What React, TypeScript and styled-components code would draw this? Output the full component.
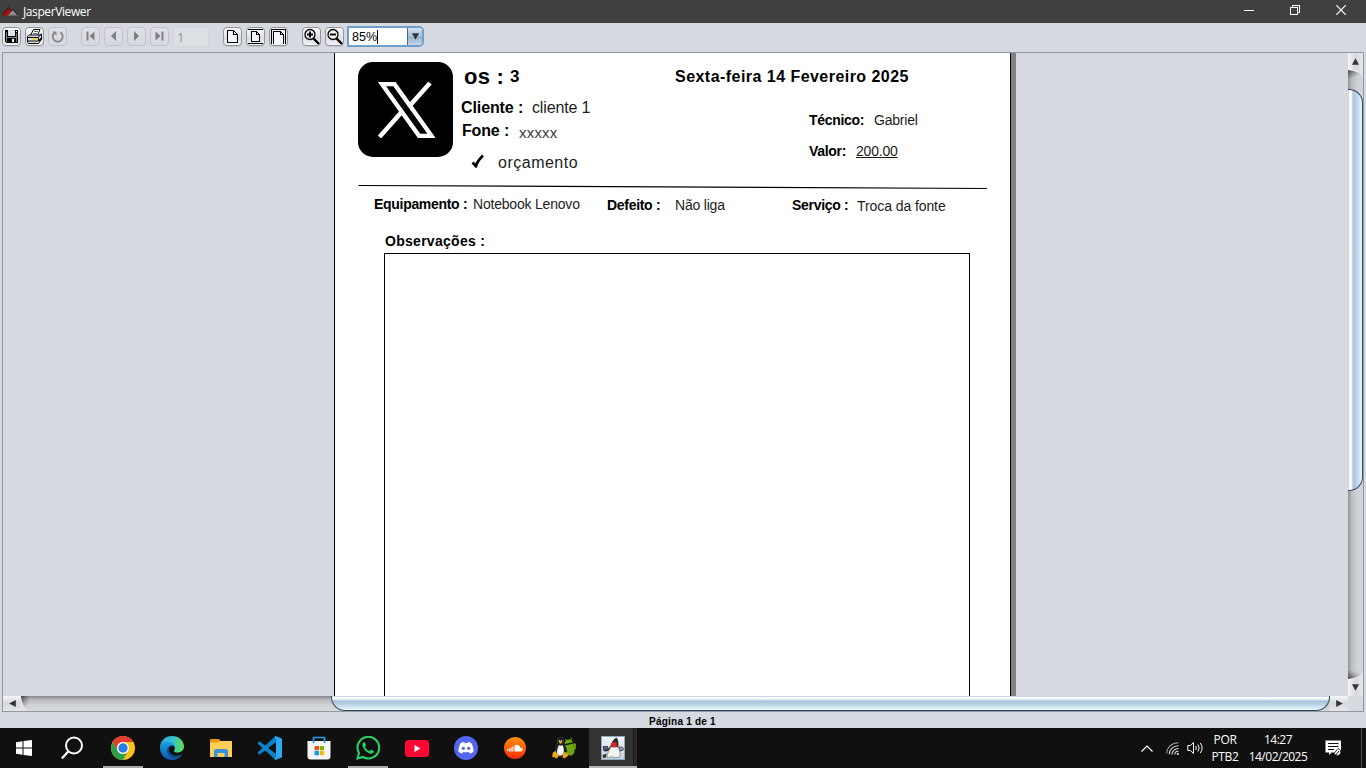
import React from 'react';
import styled, { createGlobalStyle, css } from 'styled-components';

const GlobalStyle = createGlobalStyle`
  * { box-sizing: border-box; }
  html, body { margin: 0; padding: 0; overflow: hidden; }
  body { background: #d6d9df; font-family: "Liberation Sans", Arial, sans-serif; }
  svg { display: block; flex: none; }
`;

const Window = styled.div`
  width: 1366px;
  height: 768px;
  display: flex;
  flex-direction: column;
  background: #d6d9df;
`;

/* ---------- title bar ---------- */

const TitleBar = styled.header`
  height: 23px;
  flex: none;
  display: flex;
  align-items: center;
  background: #404040;
  padding: 0 2px;
`;

const WindowTitle = styled.span`
  margin-left: 5px;
  flex: 1;
  font: 12px/23px "Open Sans", sans-serif;
  letter-spacing: -0.4px;
  color: #fff;
`;

const WindowControl = styled.div`
  width: 46px;
  height: 23px;
  display: flex;
  align-items: center;
  justify-content: center;
  padding-bottom: 3px;
`;

/* ---------- toolbar ---------- */

const Toolbar = styled.div`
  height: 29px;
  flex: none;
  display: flex;
  align-items: flex-start;
  padding: 4px 0 0 2px;
`;

const ToolGroup = styled.div<{ $gap: number }>`
  display: flex;
  gap: 4px;
  margin-right: ${(p) => p.$gap}px;
`;

const ToolButton = styled.div<{ $disabled?: boolean }>`
  width: 19px;
  height: 19px;
  border-radius: 4px;
  display: flex;
  align-items: center;
  justify-content: center;
  ${(p) =>
    p.$disabled
      ? css`
          border: 1px solid #c0c3ca;
          background: linear-gradient(#dfe1e6, #d5d8de);
        `
      : css`
          border: 1px solid #92959c;
          background: linear-gradient(#fbfbfc, #e2e4e9 50%, #d8dbe2 55%, #f3f4f7);
          box-shadow: 0 1px 0 #c3c6cc;
        `}
`;

const PageInput = styled.div`
  width: 36px;
  height: 20px;
  margin: 0 14px 0 4px;
  padding-left: 3px;
  background: #dcdfe3;
  border: 1px solid #d2d5da;
  font: 13px/18px "Open Sans", sans-serif;
  color: #8e9299;
`;

const ZoomBox = styled.div`
  display: flex;
  width: 77px;
  height: 21px;
  margin-top: -1px;
  border: 2px solid #6d9fca;
  border-radius: 1px 5px 5px 1px;
  background: #fff;
`;

const ZoomValue = styled.div`
  flex: 1;
  padding-left: 3px;
  font-size: 12.5px;
  line-height: 18px;
  color: #000;
  display: flex;
  align-items: center;
`;

const Caret = styled.i`
  width: 1px;
  height: 14px;
  background: #000;
`;

const ZoomArrow = styled.div`
  width: 15px;
  display: flex;
  align-items: center;
  justify-content: center;
  border-left: 1px solid #52687c;
  border-radius: 0 3px 3px 0;
  background: linear-gradient(#d5e2ed, #a5bdd2 50%, #96b2ca 55%, #c4d8e8);
`;

/* ---------- viewer ---------- */

const Viewer = styled.main`
  height: 660px;
  flex: none;
  margin: 0 2px;
  border: 1px solid #9297a1;
  display: grid;
  grid-template-columns: 1345px 15px;
  grid-template-rows: 643px 15px;
`;

const Viewport = styled.section`
  overflow: hidden;
  display: flex;
  padding-left: 331px;
`;

const Sheet = styled.article`
  width: 677px;
  background: #fff;
  border: solid #000;
  border-width: 0 1px;
  padding: 9px 0 0 22px;
  display: flex;
  flex-direction: column;
`;

const SheetShadow = styled.div`
  width: 5px;
  background: #808080;
`;

const SheetHeader = styled.div`
  height: 122px;
  display: grid;
  grid-template-columns: 104px 214px 1fr;
`;

const Logo = styled.div`
  width: 95px;
  height: 95px;
  margin-left: 0.5px;
  border-radius: 15px;
  background: #000;
  display: flex;
  align-items: center;
  justify-content: center;
  padding-left: 2px;
`;

const Column = styled.div<{ $top?: number; $left?: number }>`
  display: flex;
  flex-direction: column;
  padding-top: ${(p) => p.$top ?? 0}px;
  padding-left: ${(p) => p.$left ?? 0}px;
`;

const FieldRow = styled.div<{ $columns: string; $height: number; $left?: number }>`
  display: grid;
  grid-template-columns: ${(p) => p.$columns};
  height: ${(p) => p.$height}px;
  flex: none;
  align-items: start;
  padding-left: ${(p) => p.$left ?? 0}px;
`;

const Field = styled.span<{
  $size?: number;
  $bold?: boolean;
  $track?: number;
  $drop?: number;
  $underline?: boolean;
  $tone?: string;
}>`
  font-size: ${(p) => p.$size ?? 14}px;
  font-weight: ${(p) => (p.$bold ? 700 : 400)};
  line-height: 20px;
  letter-spacing: ${(p) => p.$track ?? (p.$size ? 0 : p.$bold ? -0.3 : -0.2)}px;
  padding-top: ${(p) => p.$drop ?? 0}px;
  color: ${(p) => p.$tone ?? (p.$bold ? '#000' : '#1c1c1c')};
  text-decoration: ${(p) => (p.$underline ? 'underline' : 'none')};
  text-underline-offset: 1px;
  text-decoration-thickness: 1px;
  white-space: nowrap;
`;

const CheckSlot = styled.span`
  padding-top: 4px;
`;

const NotesBox = styled.div`
  width: 586px;
  flex: 1;
  margin-left: 27px;
  border: 1px solid #000;
  border-bottom: 0;
`;

/* ---------- scroll bars ---------- */

const VTrack = styled.div`
  display: flex;
  flex-direction: column;
  background: linear-gradient(90deg, #8f9196, #bcbec3 25%, #cfd1d5 60%, #d3d5d9);
`;

const HTrack = styled.div`
  display: flex;
  background: linear-gradient(#83858a, #b9bbc0 25%, #cfd1d5 60%, #d6d8db);
`;

const ScrollButton = styled.div<{ $vertical?: boolean }>`
  width: ${(p) => (p.$vertical ? 15 : 18)}px;
  height: ${(p) => (p.$vertical ? 17 : 15)}px;
  flex: none;
  display: flex;
  align-items: center;
  justify-content: center;
  background: linear-gradient(${(p) => (p.$vertical ? '90deg' : '180deg')}, #f4f5f6, #d5d8dd 50%, #e6e8ea);
`;

const VThumb = styled.div`
  height: 402px;
  margin-top: 11px;
  border: 1px solid #33495f;
  border-left: 0;
  border-radius: 0 14px 14px 0;
  background: linear-gradient(90deg, #b9c8d4, #fff 12%, #f2f7fa 25%, #a9c1d8 38%, #c0d6e7 65%, #e6fafd);
`;

const HThumb = styled.div`
  width: 1000px;
  margin-left: 302px;
  border: 1px solid #33495f;
  border-top: 0;
  border-radius: 0 0 14px 14px;
  background: linear-gradient(#b9c8d4, #fff 12%, #f2f7fa 20%, #a9c1d8 38%, #c0d6e7 65%, #e6fafd);
`;

const Spacer = styled.div`
  flex: 1;
`;

const StatusBar = styled.footer`
  height: 16px;
  flex: none;
  padding-right: 1px;
  text-align: center;
  font-size: 10px;
  font-weight: 700;
  line-height: 19px;
  letter-spacing: 0.22px;
  color: #000;
`;

/* ---------- taskbar ---------- */

const Taskbar = styled.nav`
  height: 40px;
  flex: none;
  display: flex;
  background: #101010;
  color: #fff;
  font: 12px/17px "Open Sans", sans-serif;
`;

const TaskButton = styled.div<{ $width?: number; $running?: boolean; $active?: boolean }>`
  width: ${(p) => p.$width ?? 49}px;
  height: 40px;
  display: flex;
  align-items: center;
  justify-content: center;
  ${(p) =>
    p.$running &&
    css`
      background: linear-gradient(#a9a9a9, #a9a9a9) 5px 38px / 40px 2px no-repeat;
    `}
  ${(p) =>
    p.$active &&
    css`
      margin-left: 1px;
      padding-right: 1px;
      background: linear-gradient(#b4b4b4, #b4b4b4) 0 38px / 100% 2px no-repeat,
        linear-gradient(90deg, #333 44px, #1c1c1c 44px, #1c1c1c 45px, #292929 45px);
    `}
`;

const TrayItem = styled.div<{ $width: number }>`
  width: ${(p) => p.$width}px;
  display: flex;
  align-items: center;
  justify-content: center;
`;

const TrayText = styled.div<{ $width: number; $track?: number }>`
  width: ${(p) => p.$width}px;
  padding-top: 3px;
  text-align: center;
  white-space: nowrap;
  letter-spacing: ${(p) => p.$track ?? 0}px;
`;

const DesktopEdge = styled.div`
  width: 5px;
  border-left: 1px solid #4c4c4c;
`;

/* ---------- drawings ---------- */

const Crisp = ({ w, h, children }: { w: number; h: number; children: React.ReactNode }) => (
  <svg width={w} height={h} viewBox={`0 0 ${w} ${h}`} fill="none" shapeRendering="crispEdges">
    {children}
  </svg>
);

const JasperMark = () => (
  <svg width="16" height="9" viewBox="0 0 16 9">
    <path d="M0 8.5 6.5 0.5 9.5 3 6 8.5z" fill="#b3080c" />
    <path d="M6 8.5 11 2.5 16 8.5z" fill="#8b8b8b" />
    <path d="M0 8.5 6.5 .5 9.3 3.5 11 2.5 16 8.5" fill="none" stroke="#191919" strokeWidth="1" />
  </svg>
);

const SaveIcon = () => (
  <Crisp w={15} h={15}>
    <path d="M1 1h13v13H2l-1-1z" fill="#000" />
    <path d="M4 1h7v6H4z" fill="#dfe3e8" />
    <path d="M4 10h7v4H4z" fill="#000" />
    <path d="M8 10h2v3H8zM12 2h1v1h-1z" fill="#fff" />
    <path d="M2 3h1v10H2zM12 4h1v9h-1zM3 8h9v1H3z" fill="#777b80" />
  </Crisp>
);

const PrintIcon = () => (
  <svg width="17" height="17" viewBox="0 0 17 17">
    <path d="M4.500 7.500 7.500 1.500H14L11.500 7.500z" fill="#fff" stroke="#000" />
    <path d="M8 3.500h4M7 5.500h4" stroke="#444" strokeWidth=".8" />
    <path d="M1.500 8.500 3.500 7h10.500l1.500-1V11l-3 4.500H2.500l-1-1.500z" fill="#dcdcdc" stroke="#000" />
    <path d="M1.500 9.500h10.500l3-3M2 13h10.500V9.500" fill="none" stroke="#000" />
    <path d="M6.500 11.300h4.500" stroke="#e9d91c" strokeWidth="1.600" />
    <path d="m13 13 2-2.500" stroke="#000" strokeWidth="1.500" />
  </svg>
);

const ReloadIcon = () => (
  <svg width="13" height="13" viewBox="0 0 13 13" fill="none">
    <path d="M9.300 2.300A5 5 0 1 1 3 3.200" stroke="#85878c" strokeWidth="1.800" />
    <path d="M1.200 1.500h4.300v4.300z" fill="#85878c" />
  </svg>
);

const NavIcon = ({ dir, edge }: { dir: 'left' | 'right'; edge?: boolean }) => (
  <svg width="11" height="11" viewBox="0 0 11 11" transform={dir === 'left' ? 'scale(-1 1)' : undefined}>
    <path d={edge ? 'M1.500 .5 6.500 5 1.500 9.500z' : 'M3 0 8 5 3 10z'} fill="#7e8085" />
    {edge && <path d="M7.500 .5h2v9h-2z" fill="#7e8085" />}
  </svg>
);

const ActualSizeIcon = () => (
  <Crisp w={11} h={15}>
    <path d="M.5 1.500h6l4 4v8H.5z" fill="#f5f6f8" stroke="#000" />
    <path d="M6.500 1.500v4h4" stroke="#000" />
  </Crisp>
);

const FitPageIcon = () => (
  <Crisp w={17} h={17}>
    <path d="M1 1.500h15M1 15.500h15" stroke="#000" />
    <path d="M4.500 3.500h5l3 3v7h-8z" fill="#f5f6f8" stroke="#000" />
    <path d="M9.500 3.500v3h3" stroke="#000" />
  </Crisp>
);

const FitWidthIcon = () => (
  <Crisp w={17} h={17}>
    <path d="M1.500 16V1.500h14V16" stroke="#000" />
    <path d="M3.500 16V3.500h7l3 3V16" fill="#f5f6f8" stroke="#000" />
    <path d="M10.500 3.500v3h3" stroke="#000" />
  </Crisp>
);

const ZoomIcon = ({ plus }: { plus?: boolean }) => (
  <svg width="17" height="17" viewBox="0 0 17 17" fill="none">
    <circle cx="7" cy="6.500" r="5" fill="#f4f5f7" stroke="#000" strokeWidth="1.300" />
    <path d="m10.500 10.500 5.500 5.500" stroke="#000" strokeWidth="2.400" />
    <path d={plus ? 'M4 6.500h6M7 3.500v6' : 'M4 6.500h6'} stroke="#000" strokeWidth="1.900" />
  </svg>
);

const Arrow = ({ turn }: { turn: number }) => (
  <svg width="7" height="7" viewBox="0 0 7 7" transform={`rotate(${turn})`}>
    <path d="M0 6.800 3.500.2 7 6.800z" fill="#303338" />
  </svg>
);

const XMark = () => (
  <svg width="57" height="56" viewBox="0 0 57 56">
    <path d="M1.500 55 24.500 29M31.500 24 52 1" stroke="#fff" strokeWidth="4.500" />
    <path d="M4 2.200h12.500l37 51.600H41z" fill="#000" stroke="#fff" strokeWidth="4.300" />
  </svg>
);

const CheckMark = () => (
  <svg width="14" height="14" viewBox="0 0 14 14">
    <path d="M1.500 8.500 4.700 11.700Q7.500 5.500 12 1.500" fill="none" stroke="#000" strokeWidth="2.800" />
    <path d="M3 10 4 13.500h1.800L7 10z" fill="#000" />
  </svg>
);

/* rounded shade where the sunken track meets an end button */
const TrackCap = ({ place }: { place: 'left' | 'top' | 'bottom' }) => {
  const vertical = place !== 'left';
  const shape = {
    left: 'M0 0v1C1 8 4 13 8 15H0z',
    top: 'M0 0h15v8C13 3 8 1 0 0z',
    bottom: 'M0 8h15V0C13 5 8 7 0 8z',
  }[place];
  const shade = {
    left: 'M0 0h8v15C4 13 1 8 0 1z',
    top: 'M0 0C8 1 13 3 15 8H0z',
    bottom: 'M0 8C8 7 13 5 15 0H0z',
  }[place];
  return (
    <svg width={vertical ? 15 : 8} height={vertical ? 8 : 15}>
      <defs>
        <linearGradient
          id={`cap-${place}`}
          x1="0"
          y1={place === 'bottom' ? 1 : 0}
          x2="1"
          y2={place === 'bottom' ? 0 : 1}
        >
          <stop offset="0" stopColor="#3d3f42" stopOpacity="1" />
          <stop offset="0.750" stopColor="#888" stopOpacity="0" />
        </linearGradient>
      </defs>
      <path d={shade} fill={`url(#cap-${place})`} />
      <path d={shape} fill="#e2e4e8" />
    </svg>
  );
};

const StartIcon = () => (
  <svg width="16" height="16" viewBox="0 0 16 16" fill="#fff">
    <path d="M0 2.300 6.500 1.300v6.200H0zM7.500 1.100 16 0v7.500H7.500zM0 8.500h6.500v6.200L0 13.700zM7.500 8.500H16V16l-8.500-1.100z" />
  </svg>
);

const SearchIcon = () => (
  <svg width="24" height="24" viewBox="0 0 24 24" fill="none" stroke="#fff" strokeWidth="2">
    <circle cx="13" cy="9.500" r="8" />
    <path d="M7.700 15 .8 22.500" strokeWidth="2.300" />
  </svg>
);

const ChromeIcon = () => (
  <svg width="24" height="24" viewBox="0 0 24 24">
    <circle cx="12" cy="12" r="12" fill="#fbc116" />
    <path d="M1.610 6A12 12 0 0 1 22.390 6H12a6 6 0 0 0-5.200 9z" fill="#e33b2e" />
    <path d="M1.610 6A12 12 0 0 0 12 24l5.200-9A6 6 0 0 1 6.800 15z" fill="#2ca14c" />
    <circle cx="12" cy="12" r="6" fill="#fff" />
    <circle cx="12" cy="12" r="4.700" fill="#2a7de9" />
  </svg>
);

const EdgeIcon = () => (
  <svg width="24" height="24" viewBox="0 0 24 24">
    <defs>
      <linearGradient id="edgeTop" x1="0" y1="0.300" x2="1" y2="0.400">
        <stop offset="0" stopColor="#2da9e6" />
        <stop offset="0.500" stopColor="#2fc5d4" />
        <stop offset="1" stopColor="#62dc50" />
      </linearGradient>
      <linearGradient id="edgeSide" x1="0" y1="0" x2="0" y2="1">
        <stop offset="0" stopColor="#1b9fe0" />
        <stop offset="1" stopColor="#0c59b0" />
      </linearGradient>
    </defs>
    <path d="M0 11C.5 4.500 5.500 0 12 0c7 0 12 5 12 10.500 0 3.800-3 6-6.500 6-2.500 0-3.700-.9-3.500-1.800.7-1 1-1.700.9-2.700-.2-2-2-3.600-4.900-4.500C5.500 6.500 1.500 8 0 11z" fill="url(#edgeTop)" />
    <path d="M0 12c0-4 3.500-6.500 7.500-6.300 3.500.2 6.500 2 7.200 4.800C12.500 8.500 8.500 10 8.500 14c0 4 4 7 8.500 6.500 2.500-.3 4-1.200 5-2C20 22 16.500 24 12 24 5 24 0 18.500 0 12z" fill="url(#edgeSide)" />
    <path d="M10 9.700C6.500 11 6 16 9 19.500c2.500 3 7 4 10 2.300 1.500-.9 2.500-2 3.200-3.500-6.200 3.200-13.200.2-13.200-4.800 0-1.700.3-2.800 1-3.800z" fill="#114a8b" />
  </svg>
);

const FolderIcon = () => (
  <svg width="22" height="18" viewBox="0 0 22 18">
    <path d="M0 0h9l1.500 2H22v5H0z" fill="#e19a0b" />
    <path d="M0 3.500h8L9.500 2H22v16H0z" fill="#fdcf58" />
    <path d="M4 18v-6.500L5.500 10h11l1.500 1.500V18h-3.500v-4h-7v4z" fill="#3b93dd" />
  </svg>
);

const CodeIcon = () => (
  <svg width="24" height="24" viewBox="0 0 24 24">
    <path d="M17.500 0 0 16v1.500l1.500 1.200L18 6z" fill="#0a7fcb" />
    <path d="M1.500 5.300 0 6.500V8l17.500 16 .5-6z" fill="#1080c8" />
    <path d="M17.500 0 24 2.800v18.400L17.500 24l-1-1.500L18 21V3l-1.500-1.500z" fill="#2aaaf2" />
  </svg>
);

const StoreIcon = () => (
  <svg width="24" height="24" viewBox="0 0 24 24">
    <path d="M.5 5h23v15.500a3 3 0 0 1-3 3h-17a3 3 0 0 1-3-3z" fill="#f5f5f7" />
    <path d="M6.500 7V2q0-.5.5-.5h10q.5 0 .5.500v5" fill="none" stroke="#1aa1e8" strokeWidth="1.700" />
    <path d="M7.500 10H12v4.300H7.500z" fill="#f04e23" />
    <path d="M12.800 10h4.200v4.300h-4.200z" fill="#7fb900" />
    <path d="M7.500 15H12v4.300H7.500z" fill="#05a3ef" />
    <path d="M12.800 15h4.200v4.300h-4.200z" fill="#ffb801" />
  </svg>
);

const WhatsAppIcon = () => (
  <svg width="24" height="24" viewBox="0 0 24 24">
    <path d="M1.500 22.500 3 17A10.800 10.800 0 1 1 7 21z" fill="none" stroke="#25d366" strokeWidth="2.100" />
    <path d="M8 6.300c-1.500 1-2 2.500-1.300 4.300 1.300 3.300 4 6 7.500 7.100 1.800.5 3.600-.7 3.800-2.600l-3-1.500-1.500 1.700c-2-.7-3.700-2.300-4.600-4.200l1.200-1.500L9 6.500z" fill="#25d366" />
  </svg>
);

const YouTubeIcon = () => (
  <svg width="24" height="17" viewBox="0 0 24 17">
    <rect width="24" height="17" rx="3.500" fill="#ff0735" />
    <path d="M9.500 5v7l6-3.500z" fill="#fff" />
  </svg>
);

const DiscordIcon = () => (
  <svg width="24" height="24" viewBox="0 0 24 24">
    <circle cx="12" cy="12" r="12" fill="#5565f2" />
    <path d="M7 6.700q2-.8 3-.8l.6 1h2.800l.6-1q1 0 3 .8c1.800 2.700 2.700 5.600 2.500 9q-1.800 1.400-3.700 1.800l-1-1.500q-2.800.7-5.600 0l-1 1.500q-1.900-.4-3.700-1.800c-.2-3.400.7-6.300 2.500-9z" fill="#fff" />
    <circle cx="9.300" cy="12.300" r="1.600" fill="#5565f2" />
    <circle cx="14.700" cy="12.300" r="1.600" fill="#5565f2" />
  </svg>
);

const SoundCloudIcon = () => (
  <svg width="22" height="22" viewBox="0 0 22 22">
    <defs>
      <linearGradient id="cloudBg" x1="0" y1="0" x2="0" y2="1">
        <stop offset="0" stopColor="#ff9205" />
        <stop offset="1" stopColor="#fb2c05" />
      </linearGradient>
    </defs>
    <circle cx="11" cy="11" r="11" fill="url(#cloudBg)" />
    <path d="M10.500 8.500c2.500-1.700 5.300-.5 5.700 2.200 1.500-.2 2.500.6 2.500 1.800s-.9 1.900-2 1.900h-6.200z" fill="#fff" />
    <path d="M3.500 12.300v1.700M5.300 11.500v3M7.100 10.500v4M8.900 9.500v5" stroke="#fff" strokeWidth="1.200" />
  </svg>
);

const TuxDroidIcon = () => (
  <svg width="24" height="22" viewBox="0 0 24 22">
    <path d="m13 8.500 8.500-2 1 8.500a3 3 0 0 1-2 2.500l-1 1.500-2-1-3 .5zM22 6l2 1-.5 5.500-1.500.5zM12.800 7a4.300 4.300 0 0 1 8.300-1.800z" fill="#6fa80f" />
    <path d="M13.500 2l1.300 2M19.500 1 18.700 3.500" stroke="#7db61b" />
    <path d="M5.500 4C5.500 1 6.500 0 8.500 0s3 1.500 3 4c0 3 3 6 3.500 10l-2 5.500H5L3 15c.5-4 2.500-7 2.500-11z" fill="#17191a" stroke="#4d4d4b" strokeWidth=".6" />
    <path d="M7 8c1 .8 2.500.8 3.500 0 1.500 3 2.500 8-.5 10.500H6C4 15 5.500 11 7 8z" fill="#f1f1f1" />
    <path d="m6.500 5 2-1.200L10.700 5 8.500 7z" fill="#e8a50b" />
    <path d="M1 15.500 3.500 14l3 5-1.500 2.500-5-2zM11.500 15l3 .5 2 3-4 3-1.800-1z" fill="#f0a51a" />
    <circle cx="7.400" cy="3.700" r=".7" fill="#ddd" />
    <circle cx="9.600" cy="3.700" r=".7" fill="#ddd" />
  </svg>
);

const DukeIcon = () => (
  <svg width="24" height="24" viewBox="0 0 24 24">
    <defs>
      <linearGradient id="dukeBg" x1="0" y1="0" x2="0" y2="1">
        <stop offset="0" stopColor="#f4f6f8" />
        <stop offset="1" stopColor="#c3d1dc" />
      </linearGradient>
    </defs>
    <rect x=".5" y=".5" width="23" height="23" fill="url(#dukeBg)" stroke="#8eabc1" />
    <path d="M2 10.500h5l-1 4.500H3z" fill="#426a8c" stroke="#222" strokeWidth=".7" />
    <path d="M18 11q4-.5 4.500 1.500T19 15z" fill="#8fa8bb" stroke="#222" strokeWidth=".7" />
    <path d="M10 9.500c-1 3.500-4 7.500-4 12 2 .8 3.500-1 5-.7 1.500.2 3 1.200 5 .7 1.500-.4 2.500.2 3-1 .3-3.500-.5-7.500-2.500-11z" fill="#f2f2f2" stroke="#777" strokeWidth=".7" />
    <path d="M15.500 1.500C12.500 3 10 6.500 9 11.500c3-1.200 5.500-1.200 8 0C18 7.500 17.500 4 15.500 1.500z" fill="#2a2a2a" />
    <circle cx="13" cy="8.800" r="2.800" fill="#dc2430" />
    <path d="M9 11.500 6.500 14.500 3 13.500" fill="none" stroke="#292929" strokeWidth="1.200" />
    <path d="M1.500 19 5.500 17.500 5 21.500 2 22z" fill="#3a3a3a" />
  </svg>
);

const ChevronUp = () => (
  <svg width="12" height="7" viewBox="0 0 12 7" fill="none" stroke="#fff" strokeWidth="1.200">
    <path d="M.5 6.500 6 1l5.500 5.500" />
  </svg>
);

const WifiIcon = () => (
  <svg width="13" height="13" viewBox="0 0 13 13" fill="none" stroke="#ddd" strokeWidth="1.100">
    <path d="M.8 11.500C.8 5 6 .8 12.500.8" stroke="#999" />
    <path d="M3.300 12.300c0-5 4.200-8.600 9.200-8.600M6 12.500c0-3.500 3-6 6.500-6M8.700 12.500c0-2 1.800-3.300 3.800-3.300" />
    <circle cx="11.800" cy="12" r="1" fill="#fff" stroke="none" />
  </svg>
);

const VolumeIcon = () => (
  <svg width="17" height="14" viewBox="0 0 17 14" fill="none" stroke="#fff">
    <path d="M.8 4.500h2.500L6.500 1.500v11L3.300 9.500H.8z" />
    <path d="M8.700 5q1.300 2 0 4M10.900 3.500q2.500 3.500 0 7M13.300 2q3.700 5 0 10" />
  </svg>
);

const NotificationIcon = () => (
  <svg width="17" height="17" viewBox="0 0 17 17">
    <path d="M.5.500h15.500v9.500l-4 2.500H6.500L4 15v-2.500H.5z" fill="#fff" />
    <path d="M3 3.500h10.500M3 6.500h10.500M3 9.500h6" stroke="#111" />
    <path d="M9 13.500 13 8.500q3.500 1.500 2.800 4.500-1.300 3-4.300 2.800z" fill="#fff" stroke="#111" strokeWidth=".8" />
    <path d="M10.500 15.500 14 11" stroke="#111" />
  </svg>
);

/* ---------- application ---------- */

const taskApps = [
  { name: 'chrome', icon: <ChromeIcon />, running: true },
  { name: 'edge', icon: <EdgeIcon /> },
  { name: 'files', icon: <FolderIcon /> },
  { name: 'code', icon: <CodeIcon /> },
  { name: 'store', icon: <StoreIcon /> },
  { name: 'whatsapp', icon: <WhatsAppIcon />, running: true },
  { name: 'youtube', icon: <YouTubeIcon /> },
  { name: 'discord', icon: <DiscordIcon /> },
  { name: 'soundcloud', icon: <SoundCloudIcon /> },
  { name: 'tux', icon: <TuxDroidIcon /> },
];

const Report = () => (
  <Sheet>
    <SheetHeader>
      <Logo><XMark /></Logo>
      <Column>
        <FieldRow $columns="46px 1fr" $height={36} $left={3}>
          <Field $bold $size={22} $drop={5} $track={0.2}>os :</Field>
          <Field $bold $size={17} $drop={5}>3</Field>
        </FieldRow>
        <FieldRow $columns="71px 1fr" $height={23}>
          <Field $bold $size={16} $track={-0.1}>Cliente :</Field>
          <Field $size={16} $track={-0.15}>cliente 1</Field>
        </FieldRow>
        <FieldRow $columns="57px 1fr" $height={29} $left={1}>
          <Field $bold $size={16} $track={-0.15}>Fone :</Field>
          <Field $size={15} $drop={2} $track={0.2} $tone="#3c3c3c">xxxxx</Field>
        </FieldRow>
        <FieldRow $columns="27px 1fr" $height={24} $left={10}>
          <CheckSlot><CheckMark /></CheckSlot>
          <Field $size={16} $track={0.5} $drop={3}>orçamento</Field>
        </FieldRow>
      </Column>
      <Column $top={5}>
        <FieldRow $columns="1fr" $height={43}>
          <Field $bold $size={16} $track={0.46}>Sexta-feira 14 Fevereiro 2025</Field>
        </FieldRow>
        <FieldRow $columns="65px 1fr" $height={31} $left={134}>
          <Field $bold>Técnico:</Field>
          <Field>Gabriel</Field>
        </FieldRow>
        <FieldRow $columns="47px 1fr" $height={31} $left={134}>
          <Field $bold>Valor:</Field>
          <Field $underline>200.00</Field>
        </FieldRow>
      </Column>
    </SheetHeader>
    <svg width="632" height="6" viewBox="0 0 632 6">
      <path d="M1.500 1.500 630 4.500" stroke="#000" strokeWidth="1.200" />
    </svg>
    <FieldRow $columns="99px 134px 68px 117px 65px 1fr" $height={41} $left={17}>
      <Field $bold $drop={4}>Equipamento :</Field>
      <Field $drop={4}>Notebook Lenovo</Field>
      <Field $bold $drop={5}>Defeito :</Field>
      <Field $drop={5}>Não liga</Field>
      <Field $bold $drop={5}>Serviço :</Field>
      <Field $drop={6} $track={-0.08}>Troca da fonte</Field>
    </FieldRow>
    <FieldRow $columns="1fr" $height={22} $left={28}>
      <Field $bold $track={0.28}>Observações :</Field>
    </FieldRow>
    <NotesBox />
  </Sheet>
);

export default function App() {
  return (
    <Window>
      <GlobalStyle />
      <TitleBar>
        <JasperMark />
        <WindowTitle>JasperViewer</WindowTitle>
        <WindowControl>
          <Crisp w={10} h={10}><path d="M0 5.500h10" stroke="#fff" /></Crisp>
        </WindowControl>
        <WindowControl>
          <Crisp w={10} h={10}>
            <path d="M.5 2.500h7v7h-7zM2.500 2V.5h7v7H8" stroke="#fff" />
          </Crisp>
        </WindowControl>
        <WindowControl>
          <svg width="10" height="10" viewBox="0 0 10 10" stroke="#fff" strokeWidth="1.200">
            <path d="m.3.300 9.400 9.400M9.700.3.300 9.700" />
          </svg>
        </WindowControl>
      </TitleBar>

      <Toolbar>
        <ToolGroup $gap={14}>
          <ToolButton><SaveIcon /></ToolButton>
          <ToolButton><PrintIcon /></ToolButton>
          <ToolButton $disabled><ReloadIcon /></ToolButton>
        </ToolGroup>
        <ToolGroup $gap={0}>
          <ToolButton $disabled><NavIcon dir="left" edge /></ToolButton>
          <ToolButton $disabled><NavIcon dir="left" /></ToolButton>
          <ToolButton $disabled><NavIcon dir="right" /></ToolButton>
          <ToolButton $disabled><NavIcon dir="right" edge /></ToolButton>
        </ToolGroup>
        <PageInput>1</PageInput>
        <ToolGroup $gap={14}>
          <ToolButton><ActualSizeIcon /></ToolButton>
          <ToolButton><FitPageIcon /></ToolButton>
          <ToolButton><FitWidthIcon /></ToolButton>
        </ToolGroup>
        <ToolGroup $gap={3}>
          <ToolButton><ZoomIcon plus /></ToolButton>
          <ToolButton><ZoomIcon /></ToolButton>
        </ToolGroup>
        <ZoomBox>
          <ZoomValue>85%<Caret /></ZoomValue>
          <ZoomArrow><Arrow turn={180} /></ZoomArrow>
        </ZoomBox>
      </Toolbar>

      <Viewer>
        <Viewport>
          <Report />
          <SheetShadow />
        </Viewport>
        <VTrack>
          <ScrollButton $vertical><Arrow turn={0} /></ScrollButton>
          <TrackCap place="top" />
          <VThumb />
          <Spacer />
          <TrackCap place="bottom" />
          <ScrollButton $vertical><Arrow turn={180} /></ScrollButton>
        </VTrack>
        <HTrack>
          <ScrollButton><Arrow turn={-90} /></ScrollButton>
          <TrackCap place="left" />
          <HThumb />
          <Spacer />
          <ScrollButton><Arrow turn={90} /></ScrollButton>
        </HTrack>
      </Viewer>

      <StatusBar>Página 1 de 1</StatusBar>

      <Taskbar>
        <TaskButton $width={48}><StartIcon /></TaskButton>
        <TaskButton $width={50}><SearchIcon /></TaskButton>
        {taskApps.map((app) => (
          <TaskButton key={app.name} $running={app.running}>{app.icon}</TaskButton>
        ))}
        <TaskButton $width={48} $active><DukeIcon /></TaskButton>
        <Spacer />
        <TrayItem $width={24}><ChevronUp /></TrayItem>
        <TrayItem $width={26}><WifiIcon /></TrayItem>
        <TrayItem $width={20}><VolumeIcon /></TrayItem>
        <TrayText $width={40} $track={-0.3}>POR<br />PTB2</TrayText>
        <TrayText $width={66} $track={-0.5}>14:27<br />14/02/2025</TrayText>
        <TrayItem $width={44}><NotificationIcon /></TrayItem>
        <TrayItem $width={6} />
        <DesktopEdge />
      </Taskbar>
    </Window>
  );
}
